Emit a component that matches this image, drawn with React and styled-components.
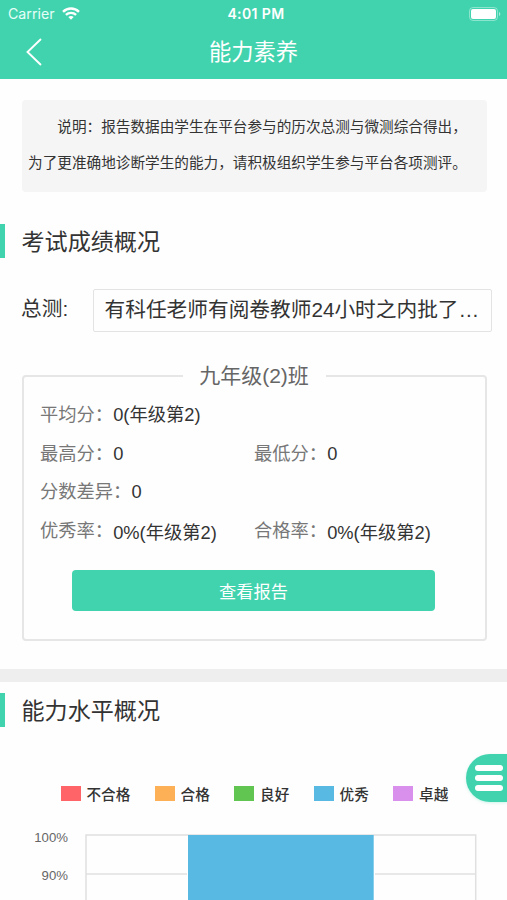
import React from "react";
import styled, { createGlobalStyle } from "styled-components";

const GREEN = "#41d3ae";

const GlobalStyle = createGlobalStyle`
  *, *::before, *::after { box-sizing: border-box; }
  body {
    margin: 0;
    background: #fefefe;
    color: #333;
    font-family: "Liberation Sans", "Noto Sans CJK SC", sans-serif;
  }
`;

const Screen = styled.div`
  width: 507px;
  height: 900px;
  overflow: hidden;
  display: flex;
  flex-direction: column;
`;

const Header = styled.header`
  flex: none;
  height: 79px;
  background: ${GREEN};
  color: #fff;
`;

const StatusBar = styled.div`
  display: grid;
  grid-template-columns: 1fr auto 1fr;
  align-items: center;
  height: 27px;
  padding: 0 5px 0 8px;
  font-family: Inter, sans-serif;
`;

const Carrier = styled.div`
  display: flex;
  align-items: center;
  gap: 7px;
  font-size: 14.2px;
  color: #e6fff8;
`;

const Clock = styled.div`
  padding-left: 2px;
  font-size: 14px;
  font-weight: 600;
  letter-spacing: 0.4px;
`;

const StatusRight = styled.div`
  display: flex;
  justify-content: flex-end;
`;

const NavBar = styled.div`
  display: grid;
  grid-template-columns: 60px 1fr 60px;
  align-items: center;
  height: 50px;
`;

const BackButton = styled.button`
  display: flex;
  padding: 0 0 0 25px;
  border: 0;
  background: none;
  color: #fff;
`;

const Title = styled.h1`
  margin: 0;
  padding-top: 2px;
  font-size: 22.3px;
  font-weight: 400;
  line-height: 32px;
  text-align: center;
`;

const Notice = styled.div`
  flex: none;
  height: 92px;
  margin: 21px 20px 0 22px;
  padding: 10px 0 0 6px;
  border-radius: 4px;
  background: #f5f5f5;
  font-size: 14.64px;
  line-height: 35.5px;
  white-space: nowrap;
`;

const NoticeLine = styled.p`
  margin: 0;
  text-indent: ${(p) => (p.$indent ? "2em" : "0")};
`;

const SectionHeading = styled.h2`
  flex: none;
  height: 34px;
  margin: ${(p) => p.$top}px 0 0;
  padding-left: 16.5px;
  border-left: 5px solid ${GREEN};
  font-size: 23.1px;
  font-weight: 400;
  line-height: 36.5px;
`;

const ExamRow = styled.div`
  flex: none;
  display: flex;
  align-items: center;
  height: 43px;
  margin: 31.5px 15px 0 21px;
`;

const ExamLabel = styled.label`
  width: 71.5px;
  font-size: 20.7px;
  line-height: 38px;
  padding-bottom: 3px;
`;

const ExamField = styled.div`
  flex: 1;
  min-width: 0;
  height: 43px;
  padding: 0 10px 0 11px;
  border: 1px solid #e3e3e3;
  border-radius: 2px;
  font-size: 20.7px;
  line-height: 40px;
  overflow: hidden;
  white-space: nowrap;
`;

const ClassCard = styled.fieldset`
  flex: none;
  height: 277px;
  margin: 31.5px 20.5px 0 21.5px;
  padding: 0;
  border: 2px solid #e6e6e6;
  border-radius: 4px;
`;

const ClassName = styled.legend`
  width: 143px;
  margin: 0 auto;
  padding: 0;
  font-size: 21px;
  line-height: 24px;
  text-align: center;
  color: #666;
`;

const Stats = styled.div`
  display: grid;
  grid-template-columns: 214px 1fr;
  grid-auto-rows: 38.5px;
  padding: 8.5px 0 0 16.5px;
`;

const Stat = styled.div`
  display: flex;
  grid-column: ${(p) => (p.$wide ? "1 / -1" : "auto")};
  font-size: 18.3px;
  line-height: 38px;
  white-space: nowrap;
`;

const StatLabel = styled.span`
  color: #777;
`;

const StatValue = styled.span`
  padding-top: ${(p) => (p.$low ? "2px" : "0")};
`;

const ReportButton = styled.button`
  display: block;
  width: 363px;
  height: 41px;
  margin: 19.5px 0 0 48.5px;
  padding: 0;
  border: 0;
  border-radius: 4px;
  background: ${GREEN};
  color: #fff;
  font: inherit;
  font-size: 17.2px;
`;

const Divider = styled.div`
  flex: none;
  height: 13.5px;
  margin-top: 28px;
  background: #eee;
`;

const Legend = styled.ul`
  flex: none;
  display: flex;
  gap: 24.3px;
  margin: 56px 0 0 60.5px;
  padding: 0;
  list-style: none;
`;

const LegendItem = styled.li`
  display: flex;
  align-items: center;
  gap: 6px;
  height: 22px;
  font-size: 14.6px;
  font-weight: 500;
  line-height: 22px;
  font-family: "Noto Sans CJK SC", sans-serif;

  &::before {
    content: "";
    width: 20px;
    height: 15px;
    margin-bottom: 1px;
    background: ${(p) => p.$color};
  }
`;

const Chart = styled.svg`
  flex: none;
  display: block;
  margin-top: 14.5px;
  font-family: "Liberation Sans", sans-serif;
  font-size: 13.2px;
`;

const MenuButton = styled.button`
  position: fixed;
  top: 754px;
  right: 0;
  display: flex;
  flex-direction: column;
  justify-content: center;
  gap: 4.6px;
  width: 41px;
  height: 48px;
  padding: 0 0 0 9px;
  border: 0;
  border-radius: 24px 0 0 24px;
  background: ${GREEN};
  box-shadow: 0 1px 3px rgba(65, 211, 174, 0.25);
`;

const MenuLine = styled.span`
  width: 28px;
  height: 5.8px;
  border-radius: 3px;
  background: #fff;
`;

const levels = [
  ["不合格", "#ff6468"],
  ["合格", "#fdb055"],
  ["良好", "#61c552"],
  ["优秀", "#58b9e3"],
  ["卓越", "#d98fec"],
];

const stats = [
  { label: "平均分：", value: "0(年级第2)", wide: true },
  { label: "最高分：", value: "0" },
  { label: "最低分：", value: "0" },
  { label: "分数差异：", value: "0", wide: true },
  { label: "优秀率：", value: "0%(年级第2)", low: true },
  { label: "合格率：", value: "0%(年级第2)", low: true },
];

const WifiIcon = () => (
  <svg width="18" height="13" viewBox="0 0 18 13" fill="none" stroke="#fff" strokeWidth="2.4">
    <path d="M1 4.8C5.5.4 12.5.4 17 4.8" />
    <path d="M3.9 7.9c2.9-2.7 7.3-2.7 10.2 0" />
    <path d="M6.3 9.9Q9 7.9 11.7 9.9L9 12.7z" fill="#fff" stroke="none" />
  </svg>
);

const BatteryIcon = () => (
  <svg width="33" height="14" viewBox="0 0 33 14">
    <rect x=".5" y=".5" width="28" height="13" rx="3.5" fill="none" stroke="#fff" strokeOpacity=".4" />
    <rect x="2" y="2" width="25" height="10" rx="2" fill="#fff" />
    <path d="M30 5v4c1.8-.7 1.8-3.3 0-4z" fill="#fff" fillOpacity=".55" />
  </svg>
);

const BackIcon = () => (
  <svg width="18" height="28" viewBox="0 0 18 28" fill="none" stroke="currentColor" strokeWidth="1.9">
    <path d="M16 1 2.5 14 16 27" />
  </svg>
);

export default function App() {
  return (
    <Screen>
      <GlobalStyle />
      <Header>
        <StatusBar>
          <Carrier>
            Carrier
            <WifiIcon />
          </Carrier>
          <Clock>4:01 PM</Clock>
          <StatusRight>
            <BatteryIcon />
          </StatusRight>
        </StatusBar>
        <NavBar>
          <BackButton aria-label="返回">
            <BackIcon />
          </BackButton>
          <Title>能力素养</Title>
        </NavBar>
      </Header>

      <Notice>
        <NoticeLine $indent>说明：报告数据由学生在平台参与的历次总测与微测综合得出，</NoticeLine>
        <NoticeLine>为了更准确地诊断学生的能力，请积极组织学生参与平台各项测评。</NoticeLine>
      </Notice>

      <SectionHeading $top={31.5}>考试成绩概况</SectionHeading>
      <ExamRow>
        <ExamLabel>总测:</ExamLabel>
        <ExamField>有科任老师有阅卷教师24小时之内批了…</ExamField>
      </ExamRow>

      <ClassCard>
        <ClassName>九年级(2)班</ClassName>
        <Stats>
          {stats.map((s) => (
            <Stat key={s.label} $wide={s.wide}>
              <StatLabel>{s.label}</StatLabel>
              <StatValue $low={s.low}>{s.value}</StatValue>
            </Stat>
          ))}
        </Stats>
        <ReportButton>查看报告</ReportButton>
      </ClassCard>

      <Divider />

      <SectionHeading $top={11}>能力水平概况</SectionHeading>
      <Legend>
        {levels.map(([name, color]) => (
          <LegendItem key={name} $color={color}>
            {name}
          </LegendItem>
        ))}
      </Legend>
      <Chart width="507" height="100" viewBox="0 820 507 100">
        <g fill="none" stroke="#e0e0e0" strokeWidth="1.5">
          <path d="M86 920V835H475.7V920" />
          <path d="M86 874H475.7" />
        </g>
        <rect x="187" y="836" width="188" height="84" fill="#fff" />
        <rect x="188" y="835" width="185.7" height="85" fill="#58b9e3" />
        <g fill="#666" textAnchor="end">
          <text x="68" y="841.5">100%</text>
          <text x="68" y="879.5">90%</text>
        </g>
      </Chart>

      <MenuButton aria-label="菜单">
        <MenuLine />
        <MenuLine />
        <MenuLine />
      </MenuButton>
    </Screen>
  );
}
